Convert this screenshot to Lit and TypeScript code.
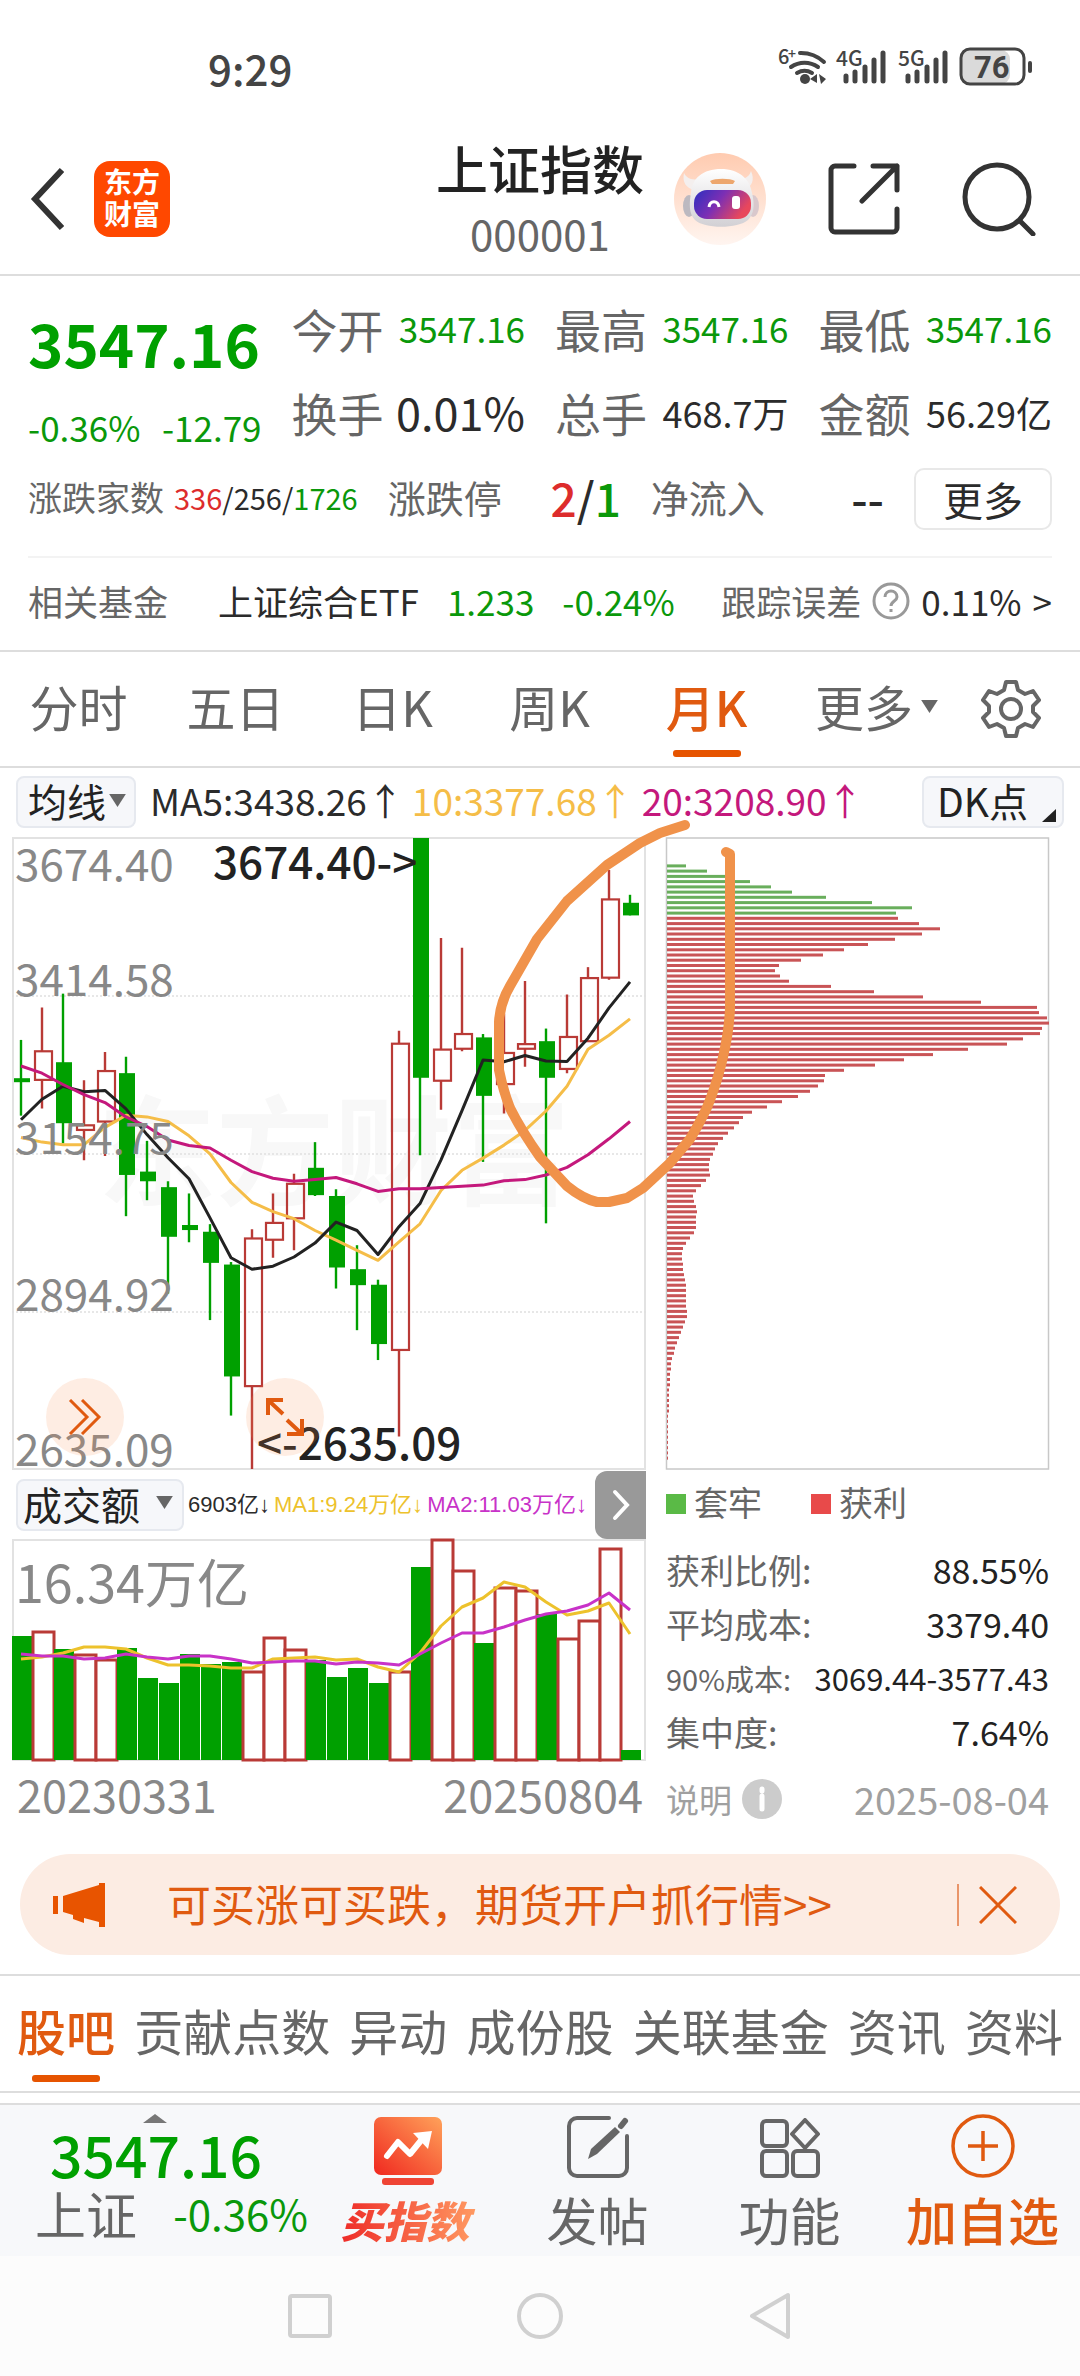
import { LitElement, html, svg, css } from "lit";
import { customElement } from "lit/decorators.js";
import { classMap } from "lit/directives/class-map.js";

/* Candles: direction, high, body top, body bottom, low (plot units, 0 = top, 1500 = bottom) */
type Candle = ["u" | "d", number, number, number, number];
const CANDLES: Candle[] = [
  ["d", 480, 571, 580, 660], ["u", 403, 507, 575, 643], ["d", 370, 533, 678, 726],
  ["u", 576, 683, 694, 766], ["u", 509, 554, 674, 756], ["d", 520, 559, 801, 899],
  ["d", 720, 793, 816, 861], ["d", 816, 830, 948, 1083], ["d", 845, 920, 932, 961],
  ["d", 918, 936, 1010, 1146], ["d", 1008, 1014, 1280, 1373], ["u", 930, 952, 1303, 1500],
  ["u", 845, 915, 955, 998], ["u", 798, 822, 904, 980], ["d", 723, 784, 849, 851],
  ["d", 835, 851, 1021, 1071], ["d", 968, 1025, 1063, 1170], ["d", 1050, 1062, 1203, 1241],
  ["u", 458, 489, 1217, 1423], ["d", 0, 0, 570, 754], ["u", 238, 503, 577, 646],
  ["u", 261, 466, 501, 507], ["d", 466, 474, 613, 770], ["u", 418, 511, 585, 655],
  ["u", 340, 490, 501, 544], ["d", 453, 483, 570, 916], ["u", 372, 473, 549, 559],
  ["u", 307, 333, 483, 483], ["u", 76, 146, 332, 337], ["d", 135, 154, 184, 184],
];
const MA5 = [670, 621, 590, 603, 600, 644, 705, 760, 810, 903, 998, 1025, 1018, 996, 963, 913, 933, 990, 924, 869, 765, 648, 528, 532, 517, 530, 531, 476, 404, 342];
const MA10 = [712, 723, 729, 729, 688, 659, 663, 674, 708, 751, 819, 866, 888, 905, 933, 956, 980, 1004, 960, 917, 838, 790, 761, 730, 695, 649, 590, 502, 469, 430];
const MA20 = [542, 559, 586, 610, 629, 663, 686, 718, 731, 737, 766, 793, 809, 816, 812, 807, 822, 840, 834, 834, 831, 828, 825, 815, 812, 801, 783, 753, 715, 674];

/* Volume bar heights, in pixels of a 221 high plot */
const VOLUMES = [124, 128, 111, 105, 100, 112, 82, 77, 106, 96, 98, 88, 122, 110, 100, 83, 92, 77, 88, 193, 220, 189, 117, 172, 169, 146, 121, 139, 211, 10];
const VMA1 = [119, 117, 113, 107, 107, 109, 118, 125, 125, 126, 128, 128, 119, 118, 117, 120, 119, 127, 132, 113, 86, 67, 58, 42, 47, 62, 75, 71, 63, 94];
const VMA2 = [114, 116, 116, 119, 118, 114, 117, 119, 116, 116, 119, 123, 122, 121, 121, 124, 122, 123, 125, 114, 103, 93, 93, 87, 80, 74, 71, 65, 53, 70];

/* Holding-cost distribution: trapped positions first, then positions in profit (1146 = full width) */
const TRAPPED = [57, 121, 184, 248, 312, 375, 476, 614, 734, 686];
const PROFIT = [
  692, 755, 819, 765, 683, 604, 531, 467, 401, 336, 325, 339, 365, 491, 620, 767, 941, 1111, 1115, 1140, 1146,
  1124, 1118, 1067, 1021, 904, 798, 711, 624, 530, 473, 470, 453, 428, 392, 346, 299, 255, 229, 215, 200, 184,
  168, 152, 144, 137, 129, 126, 126, 128, 116, 101, 86, 78, 80, 88, 89, 88, 87, 86, 80, 69, 56, 49, 46, 45, 47,
  49, 51, 53, 56, 56, 56, 57, 58, 59, 60, 54, 47, 41, 35, 30, 25, 20, 15, 12, 11, 10, 9, 8, 7, 6, 6, 5, 5, 4,
  3, 3, 3, 3, 3, 3, 3, 3,
];

const GREEN = "#00a000";
const RED = "#b93a36";
const midX = (i: number) => 9 + i * 21;
const py = (v: number) => (v * 631) / 1500;
const line = (ys: number[], f: (v: number) => number = (v) => v) =>
  ys.map((v, i) => `${midX(i)},${f(v).toFixed(1)}`).join(" ");

const caretDown = html`<svg class="caret" viewBox="0 0 18 14" aria-hidden="true"><path d="M0 0h18L9 14z" fill="#666" /></svg>`;

@customElement("app-root")
export class AppRoot extends LitElement {
  static styles = css`
    :host {
      display: block;
      background: #fff;
      color: #2b2b2b;
      font-family: "Noto Sans CJK SC", "Noto Sans", sans-serif;
      font-size: 36px;
      line-height: 54px;
      font-variant-ligatures: none;
      overflow-x: hidden;
    }
    * { box-sizing: border-box; }
    button, a {
      font: inherit;
      color: inherit;
      background: none;
      border: 0;
      padding: 0;
      margin: 0;
      text-decoration: none;
      white-space: nowrap;
      cursor: pointer;
    }
    svg { display: block; flex: none; }
    h1, p, dl, dd, dt { margin: 0; font-weight: 400; }
    .row { display: flex; align-items: center; white-space: nowrap; }
    .between { justify-content: space-between; }
    .green { color: #0a980a; }
    .red { color: #dd2c2c; }
    .gray { color: #666; }

    .status { height: 136px; padding: 0 44px 0 208px; }
    .status svg { overflow: visible; }
    .clock { font-size: 42px; font-weight: 500; color: #444; }

    .header { display: grid; grid-template-columns: minmax(0, 1fr) auto minmax(0, 1fr); border-bottom: 2px solid #ddd; }
    .brand { gap: 30px; padding: 0 0 12px 30px; }
    .logo { display: grid; place-content: center; width: 76px; height: 76px; padding-bottom: 4px; border-radius: 16px; background: #ff4800; color: #fff; font-size: 28px; line-height: 32px; font-weight: 700; }
    .title { text-align: center; padding-bottom: 8px; }
    .title h1 { font-size: 52px; line-height: 64px; font-weight: 500; color: #222; }
    .title p { font-size: 42px; line-height: 66px; color: #666; }
    .tools { justify-content: space-between; padding: 0 44px 12px 30px; }

    .quote { padding: 10px 28px 0; }
    .stats { display: grid; grid-template-columns: repeat(4, minmax(0, 1fr)); grid-auto-rows: 84px; column-gap: 30px; }
    .price { grid-row: span 2; padding-top: 14px; }
    .last { font-size: 60px; line-height: 84px; font-weight: 700; color: #00a000; }
    .change { font-size: 35px; padding-top: 16px; }
    .stat { display: flex; align-items: center; justify-content: space-between; white-space: nowrap; font-size: 35px; }
    .stat dt { font-size: 46px; color: #666; }
    .stat .mid { font-size: 36px; }
    .stat .big { font-size: 45px; }
    .breadth { display: flex; gap: 30px; align-items: center; padding: 14px 0 26px; white-space: nowrap; border-bottom: 2px solid #f3f3f3; }
    .breadth dl { display: flex; align-items: center; justify-content: space-between; padding-bottom: 4px; }
    .breadth dt { color: #666; font-size: 38px; }
    .breadth .homes { gap: 10px; }
    .breadth .homes dt { font-size: 34px; }
    .breadth .homes dd { font-size: 29px; }
    .breadth .grow { flex: 1; }
    .breadth .limit { font-size: 46px; font-weight: 500; }
    .outline { width: 138px; height: 62px; border: 2px solid #e8e8e8; border-radius: 10px; font-size: 40px; line-height: 54px; }
    .fund { height: 92px; font-size: 35px; gap: 28px; padding-bottom: 7px; }
    .fund .name { margin-left: 22px; }
    .fund .err { display: flex; align-items: center; gap: 11px; margin-left: auto; }

    .periods { display: grid; grid-template-columns: repeat(6, 157fr) 138fr; height: 118px; border-top: 2px solid #ddd; border-bottom: 2px solid #ddd; }
    .period { font-size: 49px; color: #666; display: flex; justify-content: center; align-items: center; padding-bottom: 6px; position: relative; }
    .period.more { gap: 8px; padding-left: 26px; }
    .period.on, .section.on { color: #e05a10; font-weight: 500; }
    .on::after { content: ""; position: absolute; left: 50%; bottom: 9px; width: 68px; height: 7px; margin-left: -34px; border-radius: 3px; background: #e65400; }
    .gear { display: flex; justify-content: center; align-items: center; }
    .caret { width: 17px; height: 13px; }

    .averages { padding: 8px 16px 10px; font-size: 37px; line-height: 48px; gap: 8px; }
    .averages span { padding-bottom: 4px; }
    .chip { display: flex; align-items: center; justify-content: space-between; height: 52px; border: 2px solid #e6e9ef; border-radius: 8px; background: #f6f7fa; font-size: 39px; line-height: 42px; padding-bottom: 4px; color: #222; }
    .chip.ma { width: 120px; padding-left: 10px; padding-right: 8px; margin-right: 6px; }
    .chip.dk { width: 142px; padding-left: 13px; padding-right: 6px; margin-left: auto; }
    .chip.dk svg { align-self: flex-end; }
    .chip.vol { width: 168px; padding-left: 5px; padding-right: 9px; }
    .yellow { color: #f5bd48; }
    .pink { color: #c4187c; }
    .gold { color: #edc22c; }
    .purple { color: #c832c8; }

    .charts { position: relative; display: grid; grid-template-columns: 634fr 383fr; column-gap: 20px; padding: 0 31px 27px 12px; }
    .charts svg.plot { width: 100%; height: auto; overflow: visible; }
    .charts text { font-family: "Noto Sans CJK SC", "Noto Sans", sans-serif; font-size: 44px; font-variant-ligatures: none; }
    .charts .mark text { font-weight: 500; }
    .kwrap { position: relative; }
    .float { position: absolute; bottom: 13px; width: 78px; height: 78px; border-radius: 50%; background: rgba(248, 140, 80, 0.16); display: grid; place-content: center; }
    .float.fast { left: 34px; }
    .float.full { left: 234px; }
    .volhead { height: 71px; padding-left: 4px; font-family: "Liberation Sans", "Noto Sans CJK SC", sans-serif; font-size: 22px; gap: 4px; position: relative; }
    .volhead .chip { font-family: "Noto Sans CJK SC", sans-serif; }
    .expand { position: absolute; right: 0; top: 2px; width: 51px; height: 68px; border-radius: 12px 0 0 12px; background: #999; display: grid; place-content: center; }
    .dates { font-size: 45px; line-height: 66px; color: #888; padding: 0 3px 0 5px; }

    .legend { height: 69px; font-size: 34px; line-height: 50px; color: #666; gap: 8px; }
    .legend span { padding-bottom: 4px; }
    .legend i { width: 20px; height: 20px; }
    .legend .g { background: #5aba46; }
    .legend .r { background: #e84a4a; margin-left: 41px; }
    .costs { width: 100%; border-collapse: collapse; margin-top: 5px; }
    .costs th { font-weight: 400; text-align: left; color: #666; font-size: 34px; padding: 0; white-space: nowrap; }
    .costs td { text-align: right; font-size: 34px; padding: 0; white-space: nowrap; color: #222; }
    .costs tr { height: 54px; line-height: 54px; }
    .costs .tight th { font-size: 29px; }
    .costs .tight td { font-size: 31px; }
    .note { margin-top: 13px; color: #a0a0a0; font-size: 33px; }
    .note button { display: flex; align-items: center; gap: 10px; }
    .note time { font-size: 38px; }
    .ink { position: absolute; left: 0; top: 0; width: 100%; height: auto; overflow: visible; pointer-events: none; }

    .banner { display: flex; align-items: center; margin: 0 20px 19px; height: 101px; padding: 0 43px 0 33px; border-radius: 51px; background: #fcece3; color: #e05a10; font-size: 44px; }
    .banner a { margin-left: 61px; flex: 1; padding-bottom: 4px; }
    .banner .close { border-left: 2px solid #e9956a; height: 42px; padding-left: 20px; display: flex; align-items: center; }

    .sections { display: flex; justify-content: space-between; border-top: 2px solid #ddd; border-bottom: 2px solid #ddd; padding: 0 17px; }
    .section { position: relative; font-size: 49px; line-height: 107px; padding-bottom: 8px; color: #666; }

    .dock { margin-top: 10px; border-top: 2px solid #ddd; background: #f7f8fa; display: grid; grid-template-columns: 315fr 186fr 193fr 191fr 195fr; height: 153px; color: #666; font-size: 51px; line-height: 60px; }
    .mini { padding: 9px 7px 0 35px; }
    .mini .up { margin-left: 108px; width: 24px; height: 9px; }
    .mini .num { font-size: 57px; line-height: 60px; font-weight: 500; color: #00a000; padding-left: 15px; }
    .mini .pct { font-size: 42px; }
    .item { display: flex; flex-direction: column; align-items: center; justify-content: flex-end; gap: 11px; padding-bottom: 7px; }
    .item.add { color: #e05a10; font-weight: 500; }
    .item.buy { font-size: 43px; font-weight: 900; font-style: italic; gap: 4px; }
    .item.buy span { background: linear-gradient(90deg, #ee2c28, #ff9a62); -webkit-background-clip: text; background-clip: text; color: transparent; padding-right: 6px; }
    .sysnav { height: 120px; background: #fcfcfc; display: flex; align-items: center; justify-content: center; gap: 185px; }
  `;

  private header() {
    return html`
      <div class="status row between">
        <span class="clock">9:29</span>
        <svg width="258" height="40" viewBox="0 0 258 40" fill="#444" stroke-linecap="round" role="img" aria-label="76%">
          <g font-family="Noto Sans CJK SC" font-weight="500">
            <text x="0" y="16" font-size="20">6</text><text x="10" y="11" font-size="14">+</text>
            <text x="58" y="18" font-size="21">4G</text><text x="120" y="18" font-size="21">5G</text>
          </g>
          <g fill="none" stroke="#444" stroke-width="4">
            <path d="M22 5a34 34 0 0 1 24 9M13 19a24 24 0 0 1 27 0M19 25a15 15 0 0 1 15 0" />
            <path d="M68 28v5M77 24v9M87 19v14M96 12v21M105 5v28M130 28v5M139 24v9M149 19v14M158 12v21M167 5v28" stroke-width="5" />
          </g>
          <circle cx="27" cy="31" r="5" />
          <path d="M32 31l7-5v9zM41 26l7 5-5 5z" />
          <rect x="184" y="2" width="48" height="34" rx="9" fill="#dadada" />
          <rect x="183" y="1" width="63" height="35" rx="9" fill="none" stroke="#444" stroke-width="3" />
          <rect x="250" y="13" width="4" height="12" rx="2" />
          <text x="196" y="30" font-family="Roboto" font-size="31" font-weight="700">76</text>
        </svg>
      </div>
      <header class="header">
        <div class="brand row">
          <button aria-label="返回">
            <svg width="34" height="64" viewBox="0 0 34 64" fill="none" stroke="#333" stroke-width="6"><path d="M32 3L5 32l27 29" /></svg>
          </button>
          <a href="#home" class="logo"><span>东方</span><span>财富</span></a>
        </div>
        <div class="title"><h1>上证指数</h1><p>000001</p></div>
        <div class="tools row">
          <button aria-label="智能助手">
            <svg width="92" height="92" viewBox="0 0 92 92">
              <defs>
                <linearGradient id="halo" x1="0" y1="0" x2="0" y2="1"><stop offset="0" stop-color="#ffcbb0" /><stop offset="1" stop-color="#fff5f0" /></linearGradient>
                <linearGradient id="visor" x1="0" y1="0" x2="1" y2="0.4"><stop offset="0" stop-color="#2c2fc0" /><stop offset="0.5" stop-color="#7c2fb4" /><stop offset="1" stop-color="#e8475c" /></linearGradient>
                <linearGradient id="shell" x1="0" y1="0" x2="0" y2="1"><stop offset="0" stop-color="#ffffff" /><stop offset="1" stop-color="#d2d0d4" /></linearGradient>
              </defs>
              <circle cx="46" cy="46" r="46" fill="url(#halo)" />
              <path d="M10 20c-2 9 2 15 10 17l8-12c-9 3-15 1-18-5zM77 18c4 9 1 16-7 19l-9-12c8 2 14 0 16-7z" fill="#f4efee" />
              <ellipse cx="15" cy="53" rx="6" ry="11" fill="#bcb9c0" /><ellipse cx="79" cy="53" rx="6" ry="11" fill="#d9c8cc" />
              <path d="M17 40c1-15 12-24 30-24s29 10 31 24c3 12 2 21-4 27-10 9-44 9-53 0-6-6-6-16-4-27z" fill="url(#shell)" />
              <path d="M36 28c5-3 20-3 25 0l-2 3H38z" fill="#eda66d" />
              <rect x="20" y="37" width="57" height="29" rx="13" fill="url(#visor)" />
              <path d="M35 54c1-7 9-7 10 0" fill="none" stroke="#fff" stroke-width="3" />
              <rect x="58" y="43" width="8" height="13" rx="3" fill="#fff" />
            </svg>
          </button>
          <button aria-label="分享">
            <svg width="72" height="72" viewBox="0 0 72 72" fill="none" stroke="#333" stroke-width="5" stroke-linecap="round" stroke-linejoin="round"><path d="M26 3H7a4 4 0 0 0-4 4v58a4 4 0 0 0 4 4h58a4 4 0 0 0 4-4V46M45 3h24v24M69 3L34 38" /></svg>
          </button>
          <button aria-label="搜索">
            <svg width="74" height="74" viewBox="0 0 74 74" fill="none" stroke="#333" stroke-width="5" stroke-linecap="round"><circle cx="35" cy="35" r="32" /><path d="M58 59l13 13" /></svg>
          </button>
        </div>
      </header>`;
  }

  private quote() {
    const stat = (k: string, v: string, c: string) => html`<dl class="stat"><dt>${k}</dt><dd class=${c}>${v}</dd></dl>`;
    return html`
      <section class="quote">
        <div class="stats">
          <div class="price">
            <div class="last">3547.16</div>
            <div class="change row between green"><span>-0.36%</span><span>-12.79</span></div>
          </div>
          ${stat("今开", "3547.16", "green")}${stat("最高", "3547.16", "green")}${stat("最低", "3547.16", "green")}
          ${stat("换手", "0.01%", "big")}${stat("总手", "468.7万", "mid")}${stat("金额", "56.29亿", "mid")}
        </div>
        <div class="breadth">
          <dl class="homes"><dt>涨跌家数</dt><dd><span class="red">336</span>/256/<span class="green">1726</span></dd></dl>
          <dl class="grow"><dt>涨跌停</dt><dd class="limit"><span class="red">2</span>/<span class="green">1</span></dd></dl>
          <dl class="grow"><dt>净流入</dt><dd class="limit">--</dd></dl>
          <button class="outline">更多</button>
        </div>
        <div class="fund row">
          <span class="gray">相关基金</span>
          <a href="#etf" class="name">上证综合ETF</a>
          <span class="green">1.233</span>
          <span class="green">-0.24%</span>
          <a href="#tracking" class="err">
            <span class="gray">跟踪误差</span>
            <svg width="38" height="38" viewBox="0 0 38 38" fill="none" stroke="#999" stroke-width="3"><circle cx="19" cy="19" r="17" /><path d="M13 15c0-8 12-8 12 0 0 4-6 4-6 9M19 27v3" /></svg>
            <span>0.11%</span><span>&gt;</span>
          </a>
        </div>
      </section>`;
  }

  private periods() {
    const names = ["分时", "五日", "日K", "周K", "月K"];
    return html`
      <nav class="periods">
        ${names.map((n) => html`<button class=${classMap({ period: true, on: n === "月K" })}>${n}</button>`)}
        <button class="period more">更多${caretDown}</button>
        <button class="gear" aria-label="设置">
          <svg width="60" height="60" viewBox="0 0 60 60" fill="none" stroke="#666" stroke-width="4" stroke-linejoin="round">
            <path d="M25 3h10l2 8 7 4 8-3 6 9-6 6v6l6 6-6 9-8-3-7 4-2 8H25l-2-8-7-4-8 3-6-9 6-6v-6l-6-6 6-9 8 3 7-4z" />
            <circle cx="30" cy="30" r="10" />
          </svg>
        </button>
      </nav>
      <div class="averages row">
        <button class="chip ma">均线${caretDown}</button>
        <span>MA5:3438.26↑</span><span class="yellow">10:3377.68↑</span><span class="pink">20:3208.90↑</span>
        <button class="chip dk">DK点<svg width="14" height="13" viewBox="0 0 14 13"><path d="M14 0v13H0z" fill="#222" /></svg></button>
      </div>`;
  }

  private candle(c: Candle, i: number) {
    const x = midX(i);
    const [dir, high, top, bottom, low] = c;
    const t = py(top), b = py(bottom);
    return dir === "d"
      ? svg`<path d="M${x} ${py(high)}V${py(low)}" stroke=${GREEN} stroke-width="2.4" /><rect x=${x - 7} y=${t} width="16" height=${Math.max(4, b - t)} fill=${GREEN} />`
      : svg`<path d="M${x} ${py(high)}V${t}M${x} ${b}V${py(low)}" stroke=${RED} stroke-width="2.4" /><rect x=${x - 7} y=${t} width="17" height=${Math.max(3, b - t)} fill="none" stroke=${RED} stroke-width="2.2" />`;
  }

  private kline() {
    return html`
      <div class="kwrap">
        <svg class="plot" viewBox="0 0 634 631" role="img" aria-label="月K">
          <rect x="1" y="0" width="632" height="631" fill="none" stroke="#e2e2e2" stroke-width="2" />
          <text x="86" y="358" style="font-size:118px;font-weight:700" fill="#f8f8f8">东方财富</text>
          <path d="M0 158H634M0 316H634M0 474H634" stroke="#e0e0e0" stroke-width="1.5" stroke-dasharray="2 2" />
          ${CANDLES.map((c, i) => this.candle(c, i))}
          <g fill="none" stroke-width="3" stroke-linejoin="round">
            <polyline points=${line(MA10, py)} stroke="#f5bd48" />
            <polyline points=${line(MA5, py)} stroke="#222" />
            <polyline points=${line(MA20, py)} stroke="#c4187c" />
          </g>
          <g fill="#888">
            <text x="3" y="43">3674.40</text><text x="3" y="158">3414.58</text><text x="3" y="316">3154.75</text>
            <text x="3" y="473">2894.92</text><text x="3" y="628">2635.09</text>
          </g>
          <g class="mark" fill="#222"><text x="201" y="41">3674.40-&gt;</text><text x="245" y="622">&lt;-2635.09</text></g>
        </svg>
        <button class="float fast" aria-label="快进">
          <svg width="34" height="36" viewBox="0 0 34 36" fill="none" stroke="#e05a10" stroke-width="3"><path d="M2 1l17 17L2 35M14 1l17 17-17 17" /></svg>
        </button>
        <button class="float full" aria-label="全屏">
          <svg width="40" height="40" viewBox="0 0 40 40" fill="none" stroke="#e05a10" stroke-width="4"><path d="M18 3H3v15M3 3l15 14M22 37h15V22M37 37L22 23" /></svg>
        </button>
      </div>`;
  }

  private volume() {
    return html`
      <div class="volhead row">
        <button class="chip vol">成交额${caretDown}</button>
        <span>6903亿↓</span><span class="gold">MA1:9.24万亿↓</span><span class="purple">MA2:11.03万亿↓</span>
        <button class="expand" aria-label="展开">
          <svg width="18" height="32" viewBox="0 0 18 32" fill="none" stroke="#fff" stroke-width="4" stroke-linecap="round"><path d="M3 3l12 13L3 29" /></svg>
        </button>
      </div>
      <svg class="plot" viewBox="0 0 634 221" role="img" aria-label="成交额">
        <rect x="1" y="0" width="632" height="220" fill="none" stroke="#e2e2e2" stroke-width="2" />
        ${VOLUMES.map((h, i) =>
          CANDLES[i][0] === "d"
            ? svg`<rect x=${i * 21} y=${220 - h} width="20" height=${h} fill=${GREEN} />`
            : svg`<rect x=${i * 21} y=${220 - h} width="21" height=${h} fill="#fff" stroke=${RED} stroke-width="3" />`
        )}
        <g fill="none" stroke-width="3" stroke-linejoin="round">
          <polyline points=${line(VMA1)} stroke="#edc22c" />
          <polyline points=${line(VMA2)} stroke="#c832c8" />
        </g>
        <text x="3" y="63" style="font-size:52px" fill="#888">16.34万亿</text>
      </svg>
      <div class="dates row between"><span>20230331</span><span>20250804</span></div>`;
  }

  private costs() {
    const bar = (v: number, i: number, color: string) =>
      svg`<rect x="1" y=${(26.4 + i * 5.241).toFixed(1)} width=${Math.round(v / 3)} height="3" fill=${color} />`;
    return html`
      <svg class="plot" viewBox="0 0 383 631" role="img" aria-label="筹码分布">
        <rect x="0.5" y="0" width="382" height="631" fill="none" stroke="#c8c8c8" stroke-width="1.5" />
        ${TRAPPED.map((v, i) => bar(v, i, "#69ae5c"))}
        ${PROFIT.map((v, i) => bar(v, i + TRAPPED.length, "#c95456"))}
      </svg>
      <div class="legend row"><i class="g"></i><span>套牢</span><i class="r"></i><span>获利</span></div>
      <table class="costs">
        <tr><th scope="row">获利比例:</th><td>88.55%</td></tr>
        <tr><th scope="row">平均成本:</th><td>3379.40</td></tr>
        <tr class="tight"><th scope="row">90%成本:</th><td>3069.44-3577.43</td></tr>
        <tr><th scope="row">集中度:</th><td>7.64%</td></tr>
      </table>
      <div class="note row between">
        <button>说明<svg width="40" height="40" viewBox="0 0 40 40"><circle cx="20" cy="20" r="20" fill="#ccc" /><path d="M20 17v13M20 10v2" stroke="#fff" stroke-width="5" stroke-linecap="round" /></svg></button>
        <time datetime="2025-08-04">2025-08-04</time>
      </div>`;
  }

  private dock() {
    return html`
      <footer class="dock">
        <div class="mini">
          <svg class="up" viewBox="0 0 24 9"><path d="M12 0l12 9H0z" fill="#777" /></svg>
          <div class="num">3547.16</div>
          <div class="row between"><span>上证</span><span class="pct green">-0.36%</span></div>
        </div>
        <a href="#buy" class="item buy">
          <svg width="68" height="68" viewBox="0 0 68 68">
            <defs><linearGradient id="buyfill" x1="0" y1="1" x2="1" y2="0"><stop offset="0" stop-color="#f0281f" /><stop offset="1" stop-color="#ffa25a" /></linearGradient></defs>
            <rect width="68" height="58" rx="7" fill="url(#buyfill)" />
            <rect x="8" y="61" width="52" height="7" rx="3" fill="#ef4434" />
            <path d="M13 39l11-14 12 12 13-16" fill="none" stroke="#fff" stroke-width="6" stroke-linecap="round" stroke-linejoin="round" />
            <path d="M39 16l19-2-4 18z" fill="#fff" />
          </svg>
          <span>买指数</span>
        </a>
        <a href="#post" class="item">
          <svg width="62" height="62" viewBox="0 0 62 62" fill="none" stroke="#666" stroke-width="4" stroke-linecap="round">
            <path d="M42 2H10a8 8 0 0 0-8 8v42a8 8 0 0 0 8 8h42a8 8 0 0 0 8-8V20" />
            <path d="M54 10l4-5" stroke-width="6" /><path d="M21 43l3-10L48 11l5 5-23 22z" fill="#666" stroke="none" />
          </svg>
          <span>发帖</span>
        </a>
        <a href="#tools" class="item">
          <svg width="60" height="60" viewBox="0 0 60 60" fill="none" stroke="#666" stroke-width="4" stroke-linejoin="round">
            <rect x="2" y="3" width="25" height="25" rx="4" /><rect x="2" y="33" width="25" height="25" rx="4" /><rect x="33" y="33" width="25" height="25" rx="4" /><path d="M45 2l13 14-13 14-13-14z" />
          </svg>
          <span>功能</span>
        </a>
        <a href="#watch" class="item add">
          <svg width="64" height="64" viewBox="0 0 64 64" fill="none" stroke="#e05a10" stroke-width="3.5"><circle cx="32" cy="32" r="30" /><path d="M32 17v30M17 32h30" /></svg>
          <span>加自选</span>
        </a>
      </footer>
      <nav class="sysnav">
        <button aria-label="最近任务"><svg width="44" height="44" viewBox="0 0 44 44" fill="none" stroke="#d0d0d0" stroke-width="4"><rect x="2" y="2" width="40" height="40" rx="2" /></svg></button>
        <button aria-label="主屏幕"><svg width="46" height="46" viewBox="0 0 46 46" fill="none" stroke="#d0d0d0" stroke-width="4"><circle cx="23" cy="23" r="21" /></svg></button>
        <button aria-label="后退"><svg width="44" height="48" viewBox="0 0 44 48" fill="none" stroke="#d0d0d0" stroke-width="4" stroke-linejoin="round"><path d="M40 3v42L4 24z" /></svg></button>
      </nav>`;
  }

  render() {
    const sections = ["股吧", "贡献点数", "异动", "成份股", "关联基金", "资讯", "资料"];
    return html`
      ${this.header()} ${this.quote()} ${this.periods()}
      <section class="charts">
        <div>${this.kline()}${this.volume()}</div>
        <div>${this.costs()}</div>
        <svg class="ink" viewBox="0 0 1080 400" fill="none" stroke="#f0924a" stroke-width="10" stroke-linecap="round" stroke-linejoin="round" aria-hidden="true">
          <path d="M685-13L660-5L640 5L607 27L567 63L537 101L510 148Q500 165 499 184V232Q503 252 510 270C520 290 530 305 540 319L567 348Q583 361 597 364H609L627 360L643 350L670 325L690 301C700 284 705 276 710 262C720 236 729 200 730 170V16L726 14" />
        </svg>
      </section>
      <aside class="banner">
        <svg width="53" height="46" viewBox="0 0 53 46" fill="#e85400"><rect y="14" width="5" height="18" /><path d="M10 14L46 3V1h6v44h-6v-5l-15-4v5l-11-4v-4l-10-3z" /></svg>
        <a href="#futures">可买涨可买跌，期货开户抓行情&gt;&gt;</a>
        <button class="close" aria-label="关闭"><svg width="38" height="38" viewBox="0 0 38 38" stroke="#e05a10" stroke-width="3"><path d="M1 1l36 36M37 1L1 37" /></svg></button>
      </aside>
      <nav class="sections">
        ${sections.map((s, i) => html`<button class=${classMap({ section: true, on: i === 0 })}>${s}</button>`)}
      </nav>
      ${this.dock()}`;
  }
}
